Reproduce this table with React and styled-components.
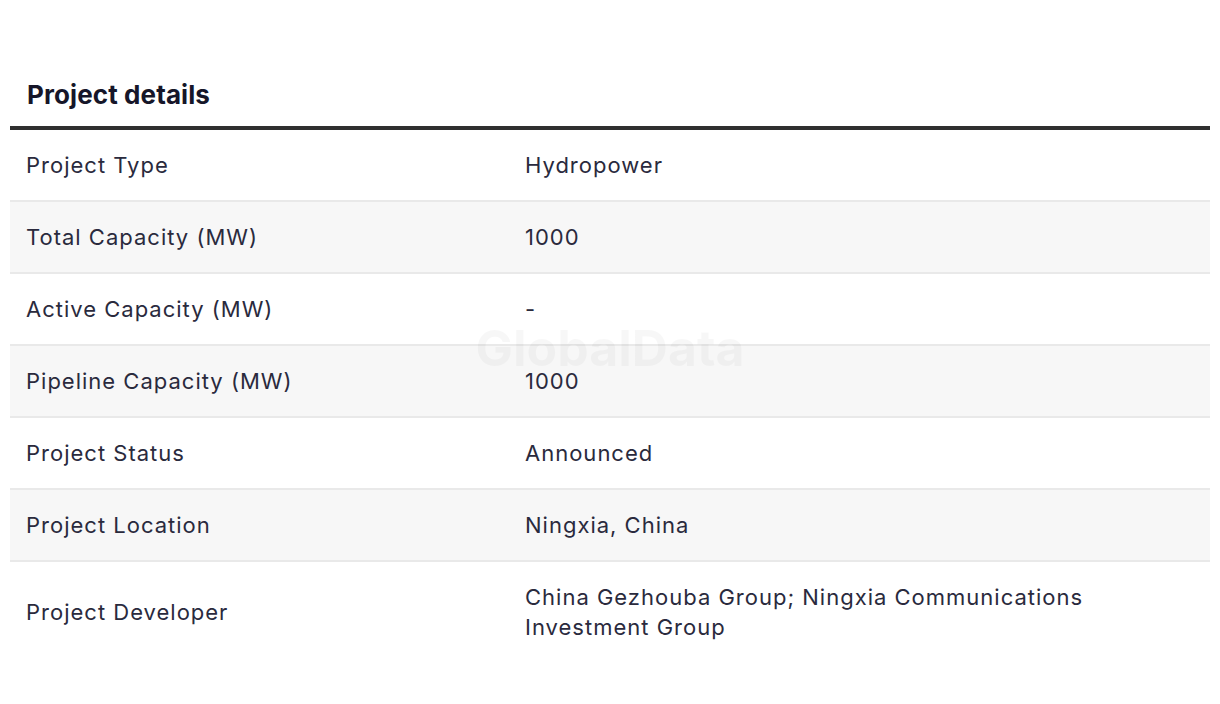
import React from "react";
import styled, { createGlobalStyle } from "styled-components";

const GlobalStyle = createGlobalStyle`
  body {
    margin: 0;
    background: #ffffff;
    font-family: Inter, "Noto Sans", "Liberation Sans", sans-serif;
    color: #1f1f2e;
  }
`;

const Wrapper = styled.section`
  position: relative;
  padding: 78px 10px 40px;
`;

const Title = styled.h2`
  margin: 0;
  padding: 0 17px 14px;
  font-size: 26px;
  font-weight: 700;
  line-height: 34px;
  color: #161629;
  letter-spacing: 0.1px;
`;

const Table = styled.div`
  border-top: 4px solid #2f2f2f;
`;

const Row = styled.div`
  display: grid;
  grid-template-columns: 499px 1fr;
  align-items: center;
  padding: 20px 16px;
  background: ${(p) => (p.$shaded ? "#f7f7f7" : "#ffffff")};
  border-bottom: ${(p) => (p.$last ? "none" : "2px solid #e9e9e9")};
  font-size: 22px;
  line-height: 30px;
  letter-spacing: 1px;
  color: #2a2a3d;
  font-weight: 400;
`;

const Cell = styled.div`
  padding-right: 100px;
`;

const Watermark = styled.div`
  position: absolute;
  left: 0;
  right: 0;
  top: 318px;
  text-align: center;
  font-size: 50px;
  line-height: 60px;
  font-weight: 700;
  color: rgba(0, 0, 0, 0.03);
  pointer-events: none;
`;

const rows = [
  ["Project Type", "Hydropower"],
  ["Total Capacity (MW)", "1000"],
  ["Active Capacity (MW)", "-"],
  ["Pipeline Capacity (MW)", "1000"],
  ["Project Status", "Announced"],
  ["Project Location", "Ningxia, China"],
  ["Project Developer", "China Gezhouba Group; Ningxia Communications Investment Group"],
];

export default function App() {
  return (
    <>
      <GlobalStyle />
      <Wrapper>
        <Title>Project details</Title>
        <Table>
          {rows.map(([label, value], i) => (
            <Row key={label} $shaded={i % 2 === 1} $last={i === rows.length - 1}>
              <Cell>{label}</Cell>
              <Cell>{value}</Cell>
            </Row>
          ))}
        </Table>
        <Watermark>GlobalData</Watermark>
      </Wrapper>
    </>
  );
}
